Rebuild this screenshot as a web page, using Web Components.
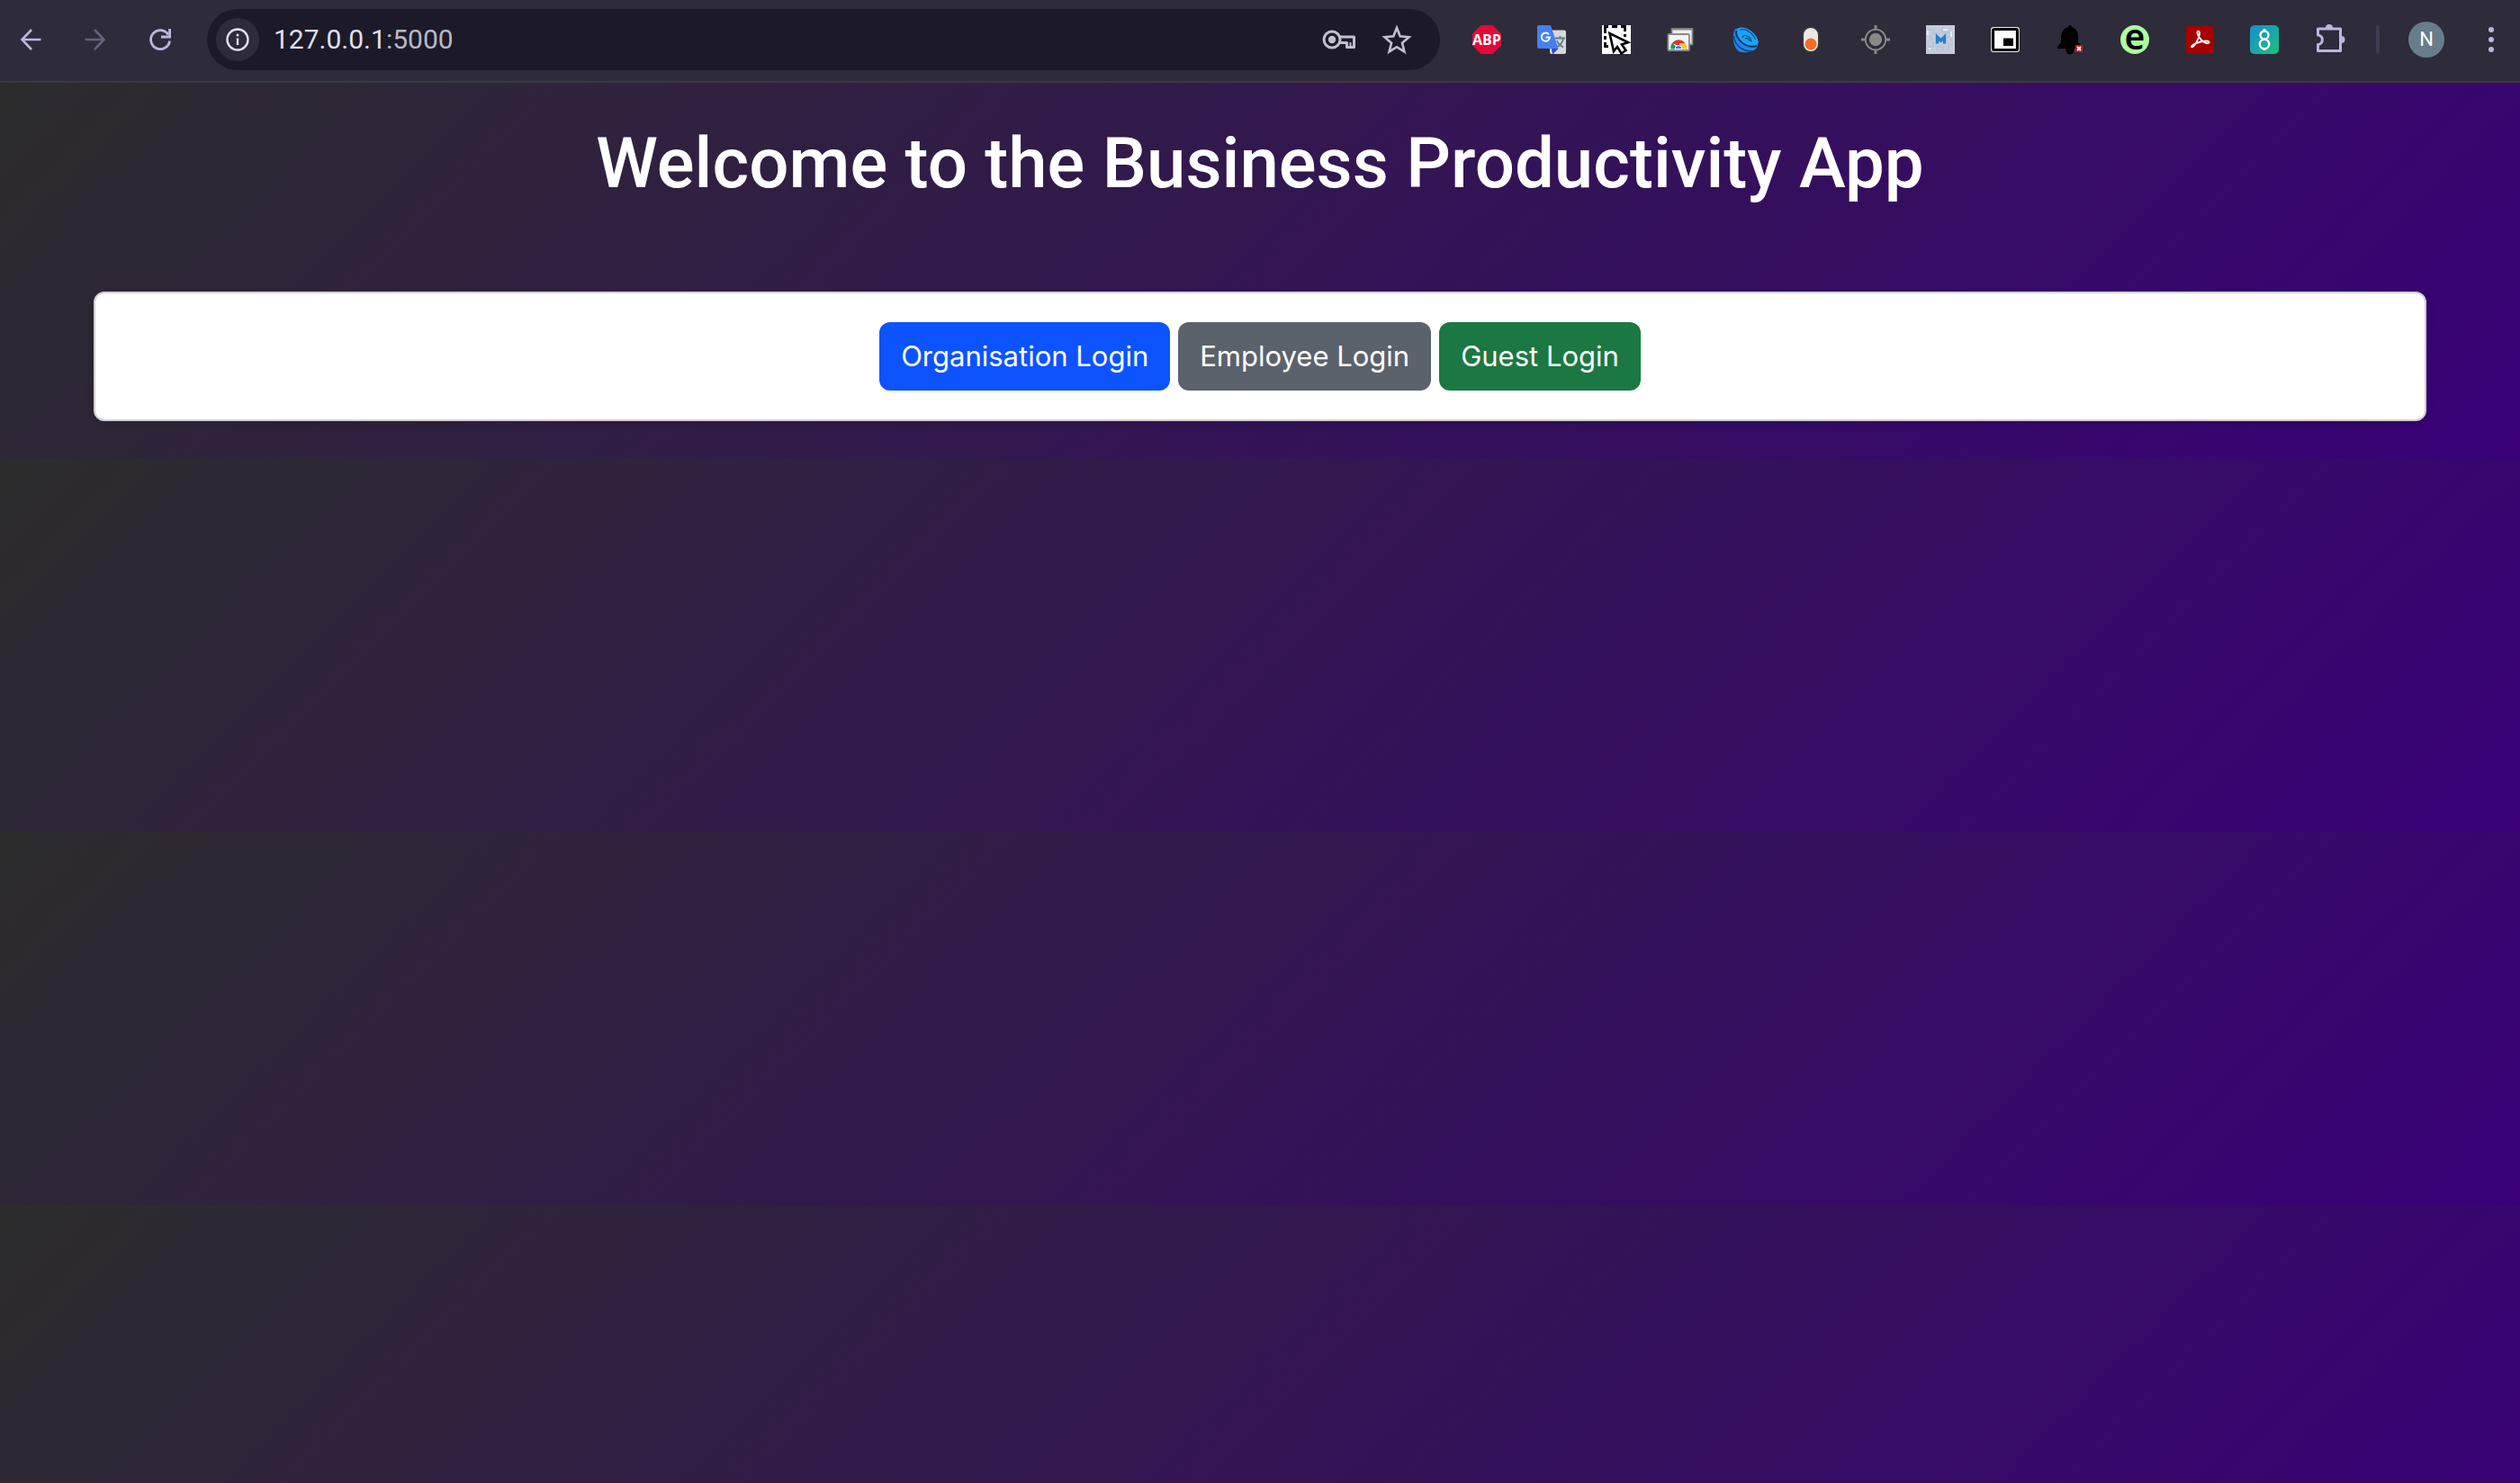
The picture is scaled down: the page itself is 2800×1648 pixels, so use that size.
<!DOCTYPE html>
<html lang="en">
<head>
<meta charset="utf-8">
<title>Business Productivity App</title>
<style>
html { background: #2e2b3a; }
body { margin: 0; min-height: 100vh; display: flex; flex-direction: column; font-family: Inter, "Liberation Sans", sans-serif; }
home-page { flex: 1; }
</style>
</head>
<body>
<browser-toolbar></browser-toolbar>
<home-page>
  <span slot="title">Welcome to the Business Productivity App</span>
  <login-button tone="primary">Organisation Login</login-button>
  <login-button tone="secondary">Employee Login</login-button>
  <login-button tone="success">Guest Login</login-button>
</home-page>

<script>
const icons = {
  back: ['Back', '<path d="M23.500 12H3.500M13 1L2.500 12l10.500 11" fill="none" stroke="#bdb6dc" stroke-width="2.6"/>'],
  forward: ['Forward', '<path d="M.500 12h20M11 1L21.500 12 11 23" fill="none" stroke="#66617a" stroke-width="2.6"/>'],
  reload: ['Reload', '<path d="M21 6.5A10.5 10.5 0 1 0 22.500 13.500" fill="none" stroke="#bdb6dc" stroke-width="2.8"/><path d="M22.600 0v9h-9.600" fill="none" stroke="#bdb6dc" stroke-width="2.8"/>'],
  info: ['View site information', '<circle cx="12" cy="12" r="11.500" fill="none" stroke="#e2dff0" stroke-width="2.400"/><path d="M12 10.500v7.500" stroke="#e2dff0" stroke-width="2.400"/><circle cx="12" cy="7" r="1.500" fill="#e2dff0"/>'],
  key: ['Manage passwords', '<circle cx="4" cy="12" r="9" fill="none" stroke="#c3bfcd" stroke-width="3"/><circle cx="4" cy="12" r="4.200" fill="#c3bfcd"/><path d="M12.500 9H28.500V20.500H20.500V15.500H12.500" fill="none" stroke="#c3bfcd" stroke-width="3" stroke-linejoin="round"/><path d="M24.500 15v5" stroke="#c3bfcd" stroke-width="2"/>'],
  star: ['Bookmark this tab', '<path d="M12-1L15.700 8.300 25.500 9.200 18 15.700 20.400 25.400 12 20.200 3.600 25.400 6 15.700-1.500 9.200 8.300 8.300z" fill="none" stroke="#c3bfcd" stroke-width="2.600"/>'],
  adblock: ['Adblock Plus', '<path d="M-4 5.500L5.500-4H18.500L28 5.500V18.500L18.500 28H5.500L-4 18.500z" fill="#e40a37"/><text x="12" y="17.800" text-anchor="middle" font-family="Open Sans, sans-serif" font-weight="700" font-size="16" fill="#fff">ABP</text>'],
  translate: ['Google Translate', '<rect x="10" y="1.500" width="18" height="26.500" rx="2" fill="#d6d8da"/><path d="M16 10.500h11M21.500 8v3M25 11c-1 4.500-4.500 8-8 10M18 13c1 3 4 6 7 7.500" stroke="#607d86" stroke-width="1.800" fill="none"/><path d="M12 22h7.500L13 28.500z" fill="#3344c4"/><path d="M-2-4H11l8.500 26H-2a2 2 0 0 1-2-2V-2a2 2 0 0 1 2-2z" fill="#4481ee"/><path d="M9 6.200A4.600 4.600 0 1 0 10 9.500H5.500" fill="none" stroke="#fff" stroke-width="2"/>'],
  selector: ['Element picker', '<path d="M-4-4H28V28H-4z" fill="#fff"/><path d="M-.500 5V-2.500H3M7-2.500H13M17-2.500H21.500V3M21.500 6V9M-.500 8V12M-.500 15V19.500H3" fill="none" stroke="#000" stroke-width="2.800"/><path d="M4.500 5L9 25l4-5 4.500 7.500 5-3.500-4.500-6.500 7-2.500z" fill="#fff" stroke="#000" stroke-width="2.600"/>'],
  store: ['Screenshots', '<rect x="1.500" y="0" width="23" height="17.500" fill="#eee" stroke="#7d7d7d" stroke-width="1.800"/><path d="M1.500-.5h23v2h-23z" fill="#888"/><rect x="-2.600" y="6" width="23.500" height="18" rx="1" fill="#f4f4f4" stroke="#8a8a8a" stroke-width="1.800"/><path d="M.500 22.500a8.700 8.700 0 0 1 1.500-7L9 22.500z" fill="#1d9b54"/><path d="M2 16a9 9 0 0 1 14.500 0L9 19z" fill="#d93838"/><path d="M10 16h7a9 9 0 0 1 1 6.500h-8z" fill="#fbc438"/><path d="M5 22.500a4 4 0 1 1 8 0z" fill="#3d75ef" stroke="#fff"/>'],
  planet: ['Devtools', '<path d="M0 0C-4 7-3 21 5 25.500c6 1.500 15 1 19-4.500 2.500-5 1-10-2-14.500z" fill="#1989f5"/><path d="M1 1C5-4 15-1 20.500 5s7 12 2.500 14-14-1-19-7.500S-1 4 1 1z" fill="#18a4ff"/><path d="M1.500 2C-1.500 9 11 23 24 19" fill="none" stroke="#12304f" stroke-width="2"/><path d="M-1.500 8C-1 19 10 26.500 21 24.500" fill="none" stroke="#147" stroke-width="1.500"/><path d="M5 1.500C11-1.500 20 5 22.500 12M8 10c1-5 9-2 10 4M11 11c3-1.500 5 1 5 3" fill="none" stroke="#12507f" stroke-width="1.300"/>'],
  toggle: ['Toggle', '<rect x="3" y="-2" width="18" height="28" rx="9" fill="#e8e8e8" stroke="#383634" stroke-width="2"/><circle cx="12" cy="17" r="6.500" fill="#f36c27"/>'],
  target: ['Location', '<circle cx="12" cy="12" r="7.200" fill="#888"/><circle cx="12" cy="12" r="11.300" fill="none" stroke="#888" stroke-width="1.800"/><path d="M12-4V1M12 23v5M-4 12H1M23 12h5" stroke="#888" stroke-width="3"/>'],
  circuit: ['Merlin', '<path d="M-4-4H28V28H-4z" fill="#c5cbda"/><path d="M-2 1h6v4h6M14-2v6h9v3M-2 20h6v-5M8 24v-4h7v5M21 24v-7h5M1 8v4h3M19 9h5v4" fill="none" stroke="#a6bfda" stroke-width="1"/><path d="M-2 7V2M-1 22h2M15 1h5M24 3v6" stroke="#e8edf5" stroke-width="2"/><path d="M8.500 16.500V9L12.500 13l4-4V16.500" fill="none" stroke="#287fc8" stroke-width="3.400"/>'],
  pip: ['Picture-in-Picture', '<rect x="-4" y="-2" width="32" height="28" rx="3" fill="#eee"/><rect x="-1.500" y=".5" width="27" height="23" rx="1.500" fill="#fff" stroke="#000" stroke-width="3.200"/><path d="M10 10.500h11v8.500H10z" fill="#000"/>'],
  bell: ['Notifications', '<path d="M10-2a2 2 0 0 1 4 0c6 2 7 7 7 12v5l5 5v2H16a4 4 0 0 1-8 4l-1-4H-2v-2l4-5V10c0-5 2-10 8-12z" fill="#000"/><path d="M18 18h8v8h-8z" fill="#d50b20"/><path d="M20 20l4 4m0-4l-4 4" stroke="#fff" stroke-width="1.800"/>'],
  evernote: ['e', '<circle cx="12" cy="12" r="16" fill="#adff9e"/><text x="12" y="22.500" text-anchor="middle" font-family="Noto Sans, sans-serif" font-weight="600" font-size="39" fill="#000">e</text>'],
  acrobat: ['Adobe Acrobat', '<rect x="-4" y="-4" width="32" height="32" rx="5" fill="#a60000"/><path d="M3 20c4 1 9-12 9-15s-3-3-2.500 0c1 5 7 11 11 11s2-3-2-2.500C13 14 3 17 3 20z" fill="none" stroke="#fff" stroke-width="1.800"/>'],
  eight: ['8', '<defs><linearGradient id="g" x1="0" y1="0" x2="1" y2="1"><stop stop-color="#158bd5"/><stop offset="1" stop-color="#1cc477"/></linearGradient></defs><rect x="-4" y="-4" width="32" height="32" rx="5" fill="url(#g)"/><circle cx="12" cy="7" r="4.500" fill="none" stroke="#fff" stroke-width="2.400"/><circle cx="12" cy="17" r="5.200" fill="none" stroke="#fff" stroke-width="2.400"/><path d="M12 0v3M12 21v3" stroke="#fff" stroke-width="2.800"/>'],
  puzzle: ['Extensions', '<path d="M-.500 0H24.500V24.500H-.500V17.500C6 17 6 7.500-.500 7z" fill="none" stroke="#bdb6dc" stroke-width="3" stroke-linejoin="round"/><path d="M8-1a4 4 0 0 1 8 0zM25.500 8a4 4 0 0 1 0 8z" fill="#bdb6dc"/>'],
  menu: ['Menu', '<circle cx="12" cy="1" r="3" fill="#bdb6dc"/><circle cx="12" cy="12" r="3" fill="#bdb6dc"/><circle cx="12" cy="23" r="3" fill="#bdb6dc"/>']
};

customElements.define('tool-icon', class extends HTMLElement {
  connectedCallback() {
    const [label, art] = icons[this.getAttribute('name')];
    this.attachShadow({ mode: 'open' }).innerHTML = `
      <style>
        :host { display: block; flex: none; }
        button { display: block; width: 40px; height: 40px; padding: 8px; border: 0; background: none; cursor: pointer; }
        svg { display: block; width: 24px; height: 24px; overflow: visible; }
      </style>
      <button type="button" aria-label="${label}"><svg viewBox="0 0 24 24" aria-hidden="true">${art}</svg></button>`;
  }
});

customElements.define('address-bar', class extends HTMLElement {
  connectedCallback() {
    this.attachShadow({ mode: 'open' }).innerHTML = `
      <style>
        :host { display: flex; align-items: center; flex: 1; height: 68px; box-sizing: border-box; padding: 0 28px 0 10px; border-radius: 34px; background: #1c1a28; }
        .site { display: grid; place-items: center; width: 48px; height: 48px; border-radius: 50%; background: #2e2b3a; }
        a { flex: 1; margin-left: 16px; font-family: Roboto, sans-serif; font-size: 30px; line-height: 40px; color: #e2dff0; text-decoration: none; }
        .port { color: #bbb8c2; }
        .actions { display: flex; gap: 24px; }
      </style>
      <span class="site"><tool-icon name="info"></tool-icon></span>
      <a href="#">127.0.0.1<span class="port">:5000</span></a>
      <span class="actions"><tool-icon name="key"></tool-icon><tool-icon name="star"></tool-icon></span>`;
  }
});

customElements.define('browser-toolbar', class extends HTMLElement {
  connectedCallback() {
    const extensions = ['adblock', 'translate', 'selector', 'store', 'planet', 'toggle', 'target', 'circuit', 'pip', 'bell', 'evernote', 'acrobat', 'eight', 'puzzle'];
    this.attachShadow({ mode: 'open' }).innerHTML = `
      <style>
        :host { display: flex; align-items: center; height: 92px; box-sizing: border-box; padding: 0 12px 2px 14px; border-bottom: 2px solid #3b3941; background: #2e2b3a; }
        nav { display: flex; gap: 32px; margin-right: 32px; }
        .extensions { display: flex; gap: 32px; margin-left: 32px; }
        .rule { width: 4px; height: 32px; margin: 0 32px; border-radius: 2px; background: #403c55; }
        .profile { width: 40px; height: 40px; margin-right: 32px; padding: 0; border: 0; border-radius: 50%; background: #667e8a; color: #fff; font: 22px/40px Roboto, sans-serif; }
      </style>
      <nav><tool-icon name="back"></tool-icon><tool-icon name="forward"></tool-icon><tool-icon name="reload"></tool-icon></nav>
      <address-bar></address-bar>
      <div class="extensions">${extensions.map(n => `<tool-icon name="${n}"></tool-icon>`).join('')}</div>
      <span class="rule"></span>
      <button class="profile" type="button">N</button>
      <tool-icon name="menu"></tool-icon>`;
  }
});

customElements.define('login-button', class extends HTMLElement {
  connectedCallback() {
    this.attachShadow({ mode: 'open' }).innerHTML = `
      <style>
        :host { display: block; }
        :host([tone=primary]) { --tone: #0d53ff; }
        :host([tone=secondary]) { --tone: #5b626b; }
        :host([tone=success]) { --tone: #1b7842; }
        a { display: block; padding: 14px 24px; border-radius: 12px; background: var(--tone); color: #fff; font-size: 31px; line-height: 48px; text-decoration: none; white-space: nowrap; }
      </style>
      <a href="#"><slot></slot></a>`;
  }
});

customElements.define('home-page', class extends HTMLElement {
  connectedCallback() {
    this.attachShadow({ mode: 'open' }).innerHTML = `
      <style>
        :host { display: block; background: linear-gradient(135deg, #2c2c2c, #390078) 0 0 / 100% 416px; }
        h1 { margin: 0; padding: 40px 24px 92px; color: #fff; font-family: Roboto, "Liberation Sans", sans-serif; font-size: 78px; font-weight: 500; line-height: 100px; text-align: center; }
        section { display: flex; flex-wrap: wrap; justify-content: center; gap: 9px; margin: 0 104px; padding: 32px; border: 2px solid #d2d0d4; border-radius: 12px; background: #fff; box-shadow: 0 4px 8px #00000020; }
      </style>
      <main>
        <h1><slot name="title"></slot></h1>
        <section><slot></slot></section>
      </main>`;
  }
});
</script>
</body>
</html>
